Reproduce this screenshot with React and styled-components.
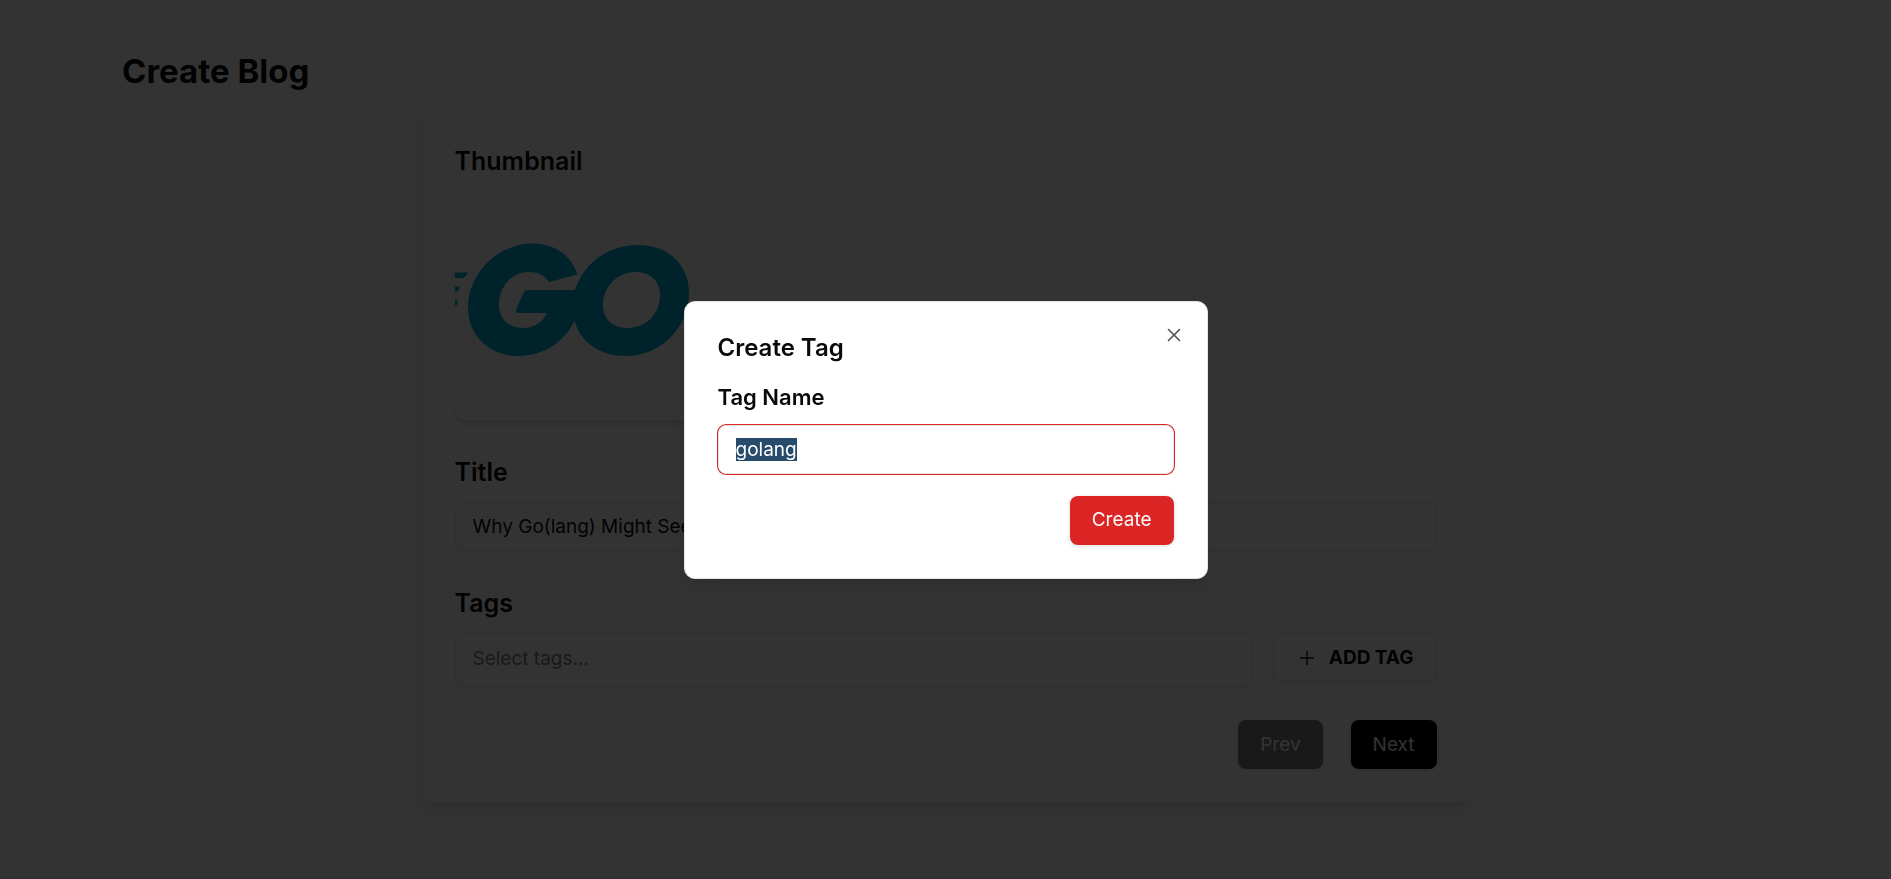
import React from "react";
import styled, { createGlobalStyle } from "styled-components";
import { Plus, X } from "lucide-react";

const Global = createGlobalStyle`
  *, *::before, *::after { box-sizing: border-box; }
  body { margin: 0; background: #fff; color: #0a0a0a; font-family: Inter, "Liberation Sans", sans-serif; font-size: 19px; line-height: 28px; }
  h1, h2, p { margin: 0; }
  button, input { font: inherit; color: inherit; }
`;

const Page = styled.main`
  min-height: 100vh;
  padding: 49px 122px 76px;
`;

const PageTitle = styled.h1`
  font-size: 33px;
  line-height: 44px;
  font-weight: 700;
`;

const Card = styled.section`
  max-width: 1048px;
  margin: 0 auto;
  padding: 49px 33px 33px;
  border-radius: 11px;
  background: #fff;
  box-shadow: 0 14px 20px -4px rgba(0, 0, 0, 0.1), 0 5px 8px -5px rgba(0, 0, 0, 0.1);
`;

const Form = styled.form`
  display: flex;
  flex-direction: column;
  gap: 33px;
`;

const Field = styled.div`
  display: flex;
  flex-direction: column;
  align-items: stretch;
  gap: ${(p) => (p.$flush ? 0 : 11)}px;
`;

const Label = styled.label`
  font-size: ${(p) => (p.$small ? 22 : 25)}px;
  line-height: ${(p) => (p.$small ? 33 : 38)}px;
  font-weight: 600;
`;

const Thumbnail = styled.div`
  width: 240px;
  height: 240px;
  overflow: hidden;
  border-radius: 10px;
  box-shadow: 0 5px 8px -1px rgba(0, 0, 0, 0.1), 0 3px 5px -2px rgba(0, 0, 0, 0.1);
  svg { display: block; }
`;

const TextBox = styled.input`
  width: 100%;
  min-width: 0;
  height: 49px;
  padding: 0 17px;
  border: 1px solid #e5e5e5;
  border-radius: 8px;
  background: #fff;
  outline: none;
  box-shadow: 0 1px 3px rgba(0, 0, 0, 0.05);
  &:focus { box-shadow: 0 0 0 1px #dc2626; }
  &::selection { background: #264b6b; color: #fff; }
`;

const TagBox = styled(TextBox)`
  height: 54px;
  padding-bottom: 3px;
  &::placeholder { color: #808080; opacity: 1; }
`;

const TagRow = styled.div`
  display: flex;
  align-items: flex-start;
  gap: 21px;
`;

const Button = styled.button`
  flex: none;
  display: inline-flex;
  align-items: center;
  justify-content: center;
  gap: 11px;
  height: 49px;
  padding: 0 22px;
  border: 0;
  border-radius: 8px;
  font-weight: 400;
  color: #fafafa;
  background: ${(p) => (p.$tone === "accent" ? "#dc2626" : "#000")};
  box-shadow: 0 1px 4px rgba(0, 0, 0, 0.15);
  &:disabled { opacity: 0.5; }
`;

const OutlineButton = styled(Button)`
  border: 1px solid #e5e5e5;
  background: #fff;
  color: #0a0a0a;
  font-weight: 700;
  box-shadow: 0 1px 3px rgba(0, 0, 0, 0.05);
`;

const Actions = styled.div`
  display: flex;
  justify-content: flex-end;
  gap: 28px;
`;

const Overlay = styled.div`
  position: fixed;
  inset: 0;
  display: flex;
  align-items: center;
  justify-content: center;
  background: rgba(0, 0, 0, 0.8);
`;

const Dialog = styled.div`
  position: relative;
  width: 524px;
  max-width: 100%;
  padding: 33px;
  border: 1px solid #e5e5e5;
  border-radius: 11px;
  background: #fff;
  box-shadow: 0 14px 20px -4px rgba(0, 0, 0, 0.1), 0 5px 8px -5px rgba(0, 0, 0, 0.1);
`;

const DialogTitle = styled.h2`
  font-size: 24px;
  line-height: 25px;
  font-weight: 600;
`;

const DialogForm = styled.form`
  display: flex;
  flex-direction: column;
  gap: 22px;
  margin-top: 21px;
`;

const CloseButton = styled.button`
  position: absolute;
  top: 22px;
  right: 22px;
  display: flex;
  padding: 0;
  border: 0;
  background: none;
  opacity: 0.7;
`;

function GoLogo() {
  return (
    <svg width="240" height="240" viewBox="0 0 240 240" role="img" aria-label="Go" fill="#00acd7">
      <path d="M0 92.500H13L10 97Q9.500 98 8 98H0ZM0 106.500H5L4 110Q3.500 111.500 2 111.500H0ZM0 119.500H2.500L2 125.500H0Z" />
      <path fillRule="evenodd" d="M79 63.500C100 64 116 75 122.500 94.500L94 102C89 95 83 92 74 92C57 92 44 106 44 125C44 139 54 148 68 148C79 148 88 142 92 133H63Q60 133 61 130L69 112Q70 110 72 110H120C128 85 151 65 183 65C214 65 234 85 234 113C234 147 206 176 171 176C145 176 126 163 119.500 141C109 162 89 176 63 176C34 176 13 155 13 128C13 93 43 63 79 63.500ZM181 92C162 92 148 107 148 125C148 139 158 148 172 148C191 148 205 134 205 115C205 101 195 92 181 92Z" />
    </svg>
  );
}

export default function App() {
  return (
    <>
      <Global />
      <Page>
        <PageTitle>Create Blog</PageTitle>
        <Card>
          <Form onSubmit={(e) => e.preventDefault()}>
            <Field $flush>
              <Label as="p">Thumbnail</Label>
              <Thumbnail><GoLogo /></Thumbnail>
            </Field>
            <Field>
              <Label htmlFor="title">Title</Label>
              <TextBox id="title" defaultValue="Why Go(lang) Might Seem" />
            </Field>
            <Field>
              <Label htmlFor="tags">Tags</Label>
              <TagRow>
                <TagBox id="tags" placeholder="Select tags..." />
                <OutlineButton type="button"><Plus size={22} strokeWidth={1.5} />ADD TAG</OutlineButton>
              </TagRow>
            </Field>
            <Actions>
              <Button type="button" disabled>Prev</Button>
              <Button type="submit">Next</Button>
            </Actions>
          </Form>
        </Card>
      </Page>
      <Overlay>
        <Dialog role="dialog" aria-modal="true" aria-labelledby="dialog-title">
          <DialogTitle id="dialog-title">Create Tag</DialogTitle>
          <DialogForm onSubmit={(e) => e.preventDefault()}>
            <Field>
              <Label htmlFor="tag-name" $small>Tag Name</Label>
              <TextBox id="tag-name" defaultValue="golang" autoFocus onFocus={(e) => e.target.select()} />
            </Field>
            <Actions>
              <Button type="submit" $tone="accent">Create</Button>
            </Actions>
          </DialogForm>
          <CloseButton type="button" aria-label="Close"><X size={22} strokeWidth={1.75} /></CloseButton>
        </Dialog>
      </Overlay>
    </>
  );
}
